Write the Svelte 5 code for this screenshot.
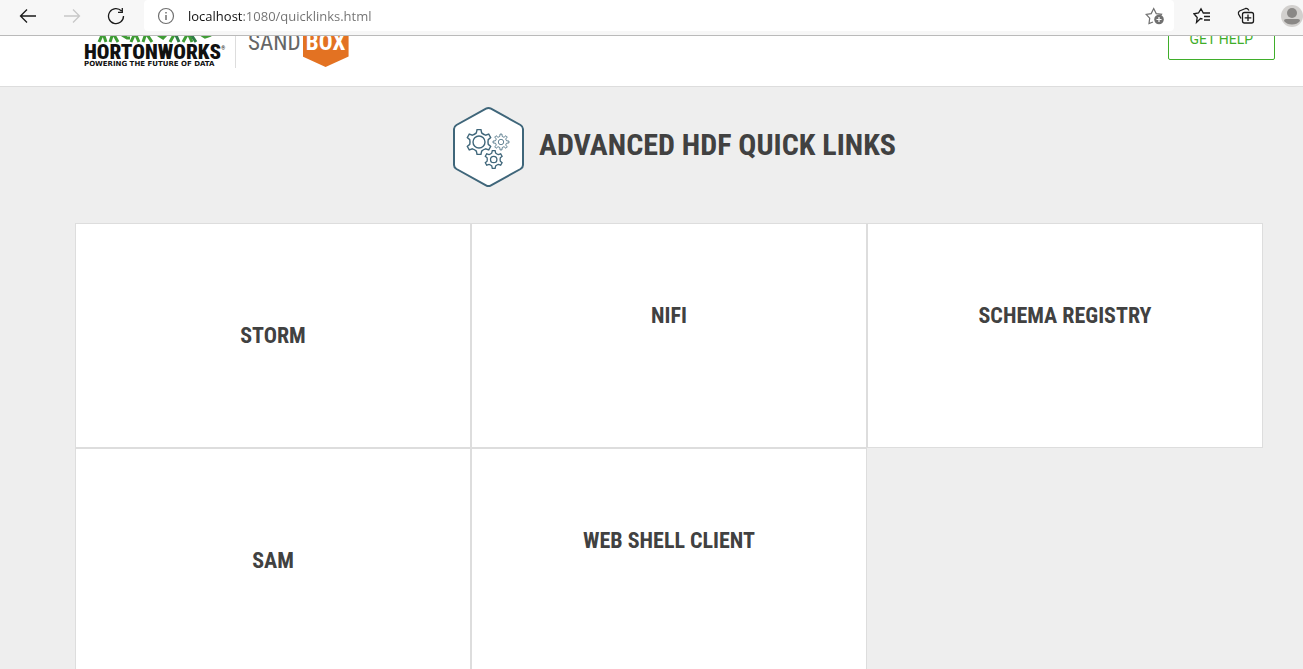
<script>
  const gear = (cx, cy, outer, root, teeth) => {
    const step = (Math.PI * 2) / teeth;
    const at = (r, a) => `${(cx + r * Math.sin(a)).toFixed(2)} ${(cy - r * Math.cos(a)).toFixed(2)}`;
    let d = '';
    for (let i = 0; i < teeth; i++) {
      const a = i * step;
      d += `${i ? 'L' : 'M'}${at(root, a - step * 0.27)}L${at(outer, a - step * 0.15)}L${at(outer, a + step * 0.15)}L${at(root, a + step * 0.27)}`;
      d += `Q${at(root * 0.92, a + step * 0.5)} ${at(root, a + step * 0.73)}`;
    }
    return d + 'Z';
  };

  const links = [
    { name: 'Storm', low: true },
    { name: 'NiFi' },
    { name: 'Schema Registry' },
    { name: 'SAM', low: true },
    { name: 'Web Shell Client' }
  ];

  let address = $state('localhost:1080/quicklinks.html');
</script>

<div class="window">
  <div class="toolbar">
    <button class="tool" aria-label="Back">
      <svg width="18" height="16" viewBox="0 0 18 16"><path d="M17 8H1.5M8 1.5L1.5 8L8 14.5" /></svg>
    </button>
    <button class="tool off" aria-label="Forward" disabled>
      <svg width="18" height="16" viewBox="0 0 18 16"><path d="M1 8H16.500M10 1.500L16.500 8L10 14.500" /></svg>
    </button>
    <button class="tool" aria-label="Refresh">
      <svg width="18" height="18" viewBox="0 0 18 18"><path d="M14.500 4A7.500 7.500 0 1 0 16.500 9M15.300 1V5.300H11" /></svg>
    </button>
    <div class="address">
      <button class="inner" aria-label="Site information">
        <svg width="18" height="18" viewBox="0 0 18 18"><circle cx="9" cy="9" r="7.500" /><path d="M9 8V13M9 5V6.500" stroke-width="1.500" /></svg>
      </button>
      <input aria-label="Address" bind:value={address} spellcheck="false" />
      <button class="inner" aria-label="Add to favorites">
        <svg width="20" height="18" viewBox="0 0 20 18">
          <path d="M8 15L4 16.500L4.700 11.200L1.200 7.500L6.200 6.600L8.700 1.500L11.200 6.600L16.500 7.300L15.500 8.500" />
          <circle class="solid" cx="14" cy="12.500" r="4.800" />
          <path class="plus" d="M14 10V15M11.500 12.500H16.500" />
        </svg>
      </button>
    </div>
    <button class="tool" aria-label="Favorites">
      <svg width="18" height="18" viewBox="0 0 18 18">
        <path d="M9.500 12L7.500 11.500L3.500 15.500L4.200 10.500L1 6.800L5.500 6L8 1.800L10.300 6H17M11 9.500H17M11 13H17" />
      </svg>
    </button>
    <button class="tool" aria-label="Collections">
      <svg width="18" height="18" viewBox="0 0 18 18">
        <path d="M4 11.500L1.500 7Q1 5 2.500 4L8.500 1.500Q10.500 1 12 3.500M7.500 5.500H14.500Q16.500 5.500 16.500 7.500V14Q16.500 16 14.500 16H7.500Q5.500 16 5.500 14V7.500Q5.500 5.500 7.500 5.500ZM11 7.500V14M7.700 10.800H14.300" />
      </svg>
    </button>
    <button class="profile" aria-label="Profile">
      <svg width="22" height="22" viewBox="0 0 22 22">
        <circle cx="11" cy="11" r="11" fill="#d2d0ce" /><circle cx="11" cy="8" r="5" fill="#8a8886" />
        <path d="M3 16Q3 14 5 14H17Q19 14 19 16Q16 19.500 11 19.500Q6 19.500 3 16Z" fill="#8a8886" />
      </svg>
    </button>
  </div>

  <header>
    <a class="brand" href="#home">
      <span class="works">
        <svg width="130" height="12" viewBox="0 0 130 12" fill="none" stroke="#3f9c35" stroke-width="3">
          <path d="M15 11L19 2L22 11M26 11L29 2L34 11M38 4L43 7H46M47 11L51 2L55 11M59 11L62 2L68 11M74 4L79 7L82 4M86 11L91 2M99 11L104 2L108 11M116 3L121 6L127 4" />
          <path d="M91 2L95 11M102 4L106 2L112 11" stroke="#2f7d46" />
        </svg>
        <b>HORTONWORKS<sup>®</sup></b>
        <small>POWERING THE FUTURE OF DATA</small>
      </span>
      <span class="sandbox">
        <span class="sand">SAND</span><span class="box">BOX</span>
      </span>
    </a>
    <a class="help" href="#help">GET HELP</a>
  </header>

  <main>
    <div class="title">
      <svg width="72" height="82" viewBox="0 0 72 82" fill="none" stroke="#3f667a">
        <path d="M34 2.600Q36.500 1.200 39 2.600L68.500 19Q71 20.500 71 23V59Q71 61.500 68.500 63L39 79.400Q36.500 80.800 34 79.400L4.500 63Q2 61.500 2 59V23Q2 20.500 4.500 19Z" fill="#fff" stroke-width="2" />
        <path d={gear(27, 36, 12.5, 9.5, 6)} stroke-width="1.400" />
        <circle cx="27" cy="36" r="6" stroke-width="1.400" />
        <path d={gear(49, 36, 8, 5.7, 8)} stroke-width="0.800" />
        <circle cx="49" cy="36" r="2.700" stroke-width="0.800" />
        <path d={gear(41.7, 53.5, 9, 6.8, 6)} stroke-width="1.300" />
        <circle cx="41.700" cy="53.500" r="3.200" stroke-width="1.300" />
      </svg>
      <h1>Advanced HDF Quick Links</h1>
    </div>
    <nav>
      {#each links as link}
        <a class="card" class:low={link.low} href="#{link.name}">{link.name}</a>
      {/each}
    </nav>
  </main>
</div>

<style>
  :global(body) { margin: 0; }
  * { box-sizing: border-box; }
  button { border: 0; padding: 0; background: none; display: flex; align-items: center; justify-content: center; }
  a { text-decoration: none; }
  .window { height: 100vh; overflow: hidden; display: flex; flex-direction: column; background: #eee; font-family: Roboto, sans-serif; }
  .toolbar { flex: none; display: flex; align-items: center; height: 36px; padding: 0 0 4px 6px; background: #f7f7f7; border-bottom: 1px solid #bababa; overflow: hidden; }
  .toolbar svg { fill: none; stroke: #1b1b1b; stroke-width: 1.3; }
  .tool { width: 44px; height: 31px; flex: none; }
  .toolbar .off svg { stroke: #c8c8c8; }
  .address { flex: 1; display: flex; align-items: center; gap: 13px; height: 31px; margin: 0 6px; padding: 0 9px 0 13px; background: #fff; border-radius: 4px; }
  .toolbar .address svg { stroke: #707070; stroke-width: 1.2; }
  .address .solid { fill: #707070; stroke: none; }
  .address .plus { stroke: #fff; }
  input { flex: 1; min-width: 0; border: 0; padding: 0; outline: 0; font: 13px/20px "Open Sans", sans-serif; color: transparent; background: linear-gradient(90deg, #111 55px, #707070 55px); background-clip: text; }
  .profile { flex: none; width: 35px; justify-content: flex-end; }
  .toolbar .profile svg { stroke: none; }
  header { flex: none; display: flex; justify-content: space-between; align-items: flex-end; height: 51px; padding: 0 28px 0 84px; background: #fff; border-bottom: 1px solid #ddd; overflow: hidden; }
  .brand { display: flex; align-items: flex-end; margin-bottom: 18px; }
  .works { display: flex; flex-direction: column; width: 152px; border-right: 1px solid #ddd; color: #111; }
  .works svg { margin-bottom: 1px; }
  .works b { height: 16px; font: 900 21px/16px "Roboto Condensed", Roboto, sans-serif; white-space: nowrap; }
  .works sup { font-size: 5px; line-height: 5px; vertical-align: 9px; }
  .works small { font: 700 7px/8px "DejaVu Sans", sans-serif; white-space: nowrap; }
  .sandbox { display: flex; align-items: flex-end; padding-left: 12px; font-family: "Roboto Condensed", Roboto, sans-serif; font-size: 23px; line-height: 28px; }
  .sand { color: #666; padding-bottom: 11px; }
  .box { width: 46px; height: 40px; padding-top: 2px; margin: 0 0 1px 2px; text-align: center; background: #e37222; color: #fff; font-weight: 700; clip-path: polygon(0 0, 100% 0, 100% 74%, 50% 100%, 0 74%); }
  .help { margin-bottom: 26px; padding: 9px 21px; border: 1px solid #3fae2a; border-radius: 2px; color: #3fae2a; font-size: 14px; line-height: 22px; }
  main { padding: 19px 40px 0 75px; }
  .title { display: flex; justify-content: center; gap: 15px; padding: 0 0 35px 10px; }
  h1 { margin: 0; padding-top: 21px; font: 700 30px/36px "Roboto Condensed", Roboto, sans-serif; color: #414141; text-transform: uppercase; }
  nav { display: grid; grid-template-columns: repeat(3, 1fr); grid-auto-rows: 225px; }
  .card { padding-top: 78px; border: 1px solid #ddd; background: #fff; color: #414141; text-align: center; text-transform: uppercase; font: 700 22px/28px "Roboto Condensed", Roboto, sans-serif; }
  .low { padding-top: 98px; }
</style>
